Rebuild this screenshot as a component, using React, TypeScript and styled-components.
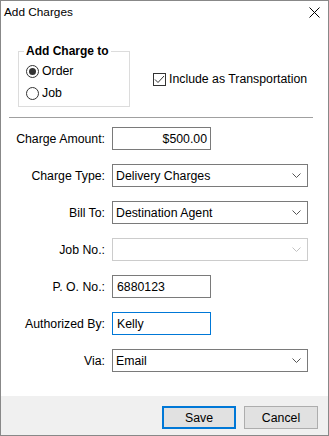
import styled, { createGlobalStyle } from 'styled-components';

const GlobalStyle = createGlobalStyle`
  html, body { margin: 0; padding: 0; background: #fff; }
  * { box-sizing: border-box; }
  body { font-family: "Liberation Sans", Arial, sans-serif; font-size: 12.3px; color: #000; }
`

const Window = styled.div`
  width: 329px;
  height: 436px;
  border: 1px solid #888;
  background: #fff;
  display: flex;
  flex-direction: column;
`

const TitleBar = styled.div`
  height: 22px;
  display: flex;
  align-items: center;
  justify-content: space-between;
  padding: 0 8px 0 3px;
  font-size: 11.8px;
`

const Close = styled.svg`
  width: 11px;
  height: 11px;
  margin-top: 1px;
`

const Body = styled.div`
  flex: 1;
  display: flex;
  flex-direction: column;
`

const TopRow = styled.div`
  display: flex;
  align-items: flex-start;
  padding: 21px 0 0 17px;
`

const GroupBox = styled.fieldset`
  margin: 0;
  width: 112px;
  padding: 2px 7px 2px 7px;
  border: 1px solid #dcdcdc;
`

const Legend = styled.legend`
  font-weight: bold;
  font-size: 12px;
  line-height: 14px;
  padding: 0 2px;
  margin-left: -2px;
`

const OptionRow = styled.label`
  height: 22px;
  display: flex;
  align-items: center;
  gap: 3px;
`

const RadioDot = styled.span<{ $checked?: boolean }>`
  width: 13px;
  height: 13px;
  border-radius: 50%;
  border: 1px solid #333;
  display: flex;
  align-items: center;
  justify-content: center;
  &::after {
    content: '';
    width: 7px;
    height: 7px;
    border-radius: 50%;
    background: ${p => (p.$checked ? '#333' : 'transparent')};
  }
`

const CheckRow = styled.label`
  display: flex;
  align-items: center;
  gap: 3px;
  margin: 28px 0 0 23px;
`

const CheckBox = styled.span`
  width: 13px;
  height: 13px;
  border: 1px solid #333;
  display: flex;
  align-items: center;
  justify-content: center;
`

const Separator = styled.div`
  height: 1px;
  background: #a0a0a0;
  margin: 10px 0 0 8px;
  width: 304px;
`

const Form = styled.div`
  display: grid;
  grid-template-columns: 104px auto;
  column-gap: 7px;
  row-gap: 14px;
  margin-top: 9px;
  align-items: center;
`

const Label = styled.div`
  text-align: right;
`

const TextBox = styled.div<{ $focus?: boolean; $right?: boolean }>`
  width: 99px;
  height: 23px;
  border: 1px solid ${p => (p.$focus ? '#0078d7' : '#7a7a7a')};
  display: flex;
  align-items: center;
  justify-content: ${p => (p.$right ? 'flex-end' : 'flex-start')};
  padding: 0 3px 0 4px;
`

const Select = styled.div<{ $disabled?: boolean }>`
  width: 196px;
  height: 23px;
  border: 1px solid ${p => (p.$disabled ? '#cccccc' : '#7a7a7a')};
  display: flex;
  align-items: center;
  justify-content: space-between;
  padding: 0 6px 0 3px;
  svg { stroke: ${p => (p.$disabled ? '#c2c2c2' : '#555')}; }
`

const Footer = styled.div`
  height: 39px;
  background: #f0f0f0;
  display: flex;
  justify-content: flex-end;
  align-items: flex-start;
  gap: 8px;
  padding: 10px 10px 0 0;
`

const Button = styled.button<{ $default?: boolean }>`
  width: 74px;
  height: 23px;
  font-family: inherit;
  font-size: 12.3px;
  color: #000;
  background: #e1e1e1;
  border: ${p => (p.$default ? '2px solid #0078d7' : '1px solid #adadad')};
  padding: 0;
`

function Chevron() {
  return (
    <svg width="9" height="5" viewBox="0 0 9 5" fill="none" strokeWidth="1">
      <path d="M0.5 0.5 L4.5 4.5 L8.5 0.5" />
    </svg>
  )
}

function App() {
  return (
    <Window>
      <GlobalStyle />
      <TitleBar>
        <span>Add Charges</span>
        <Close viewBox="0 0 11 11">
          <path d="M0.5 0.5 L10.5 10.5 M10.5 0.5 L0.5 10.5" stroke="#000" strokeWidth="1" />
        </Close>
      </TitleBar>
      <Body>
        <TopRow>
          <GroupBox>
            <Legend>Add Charge to</Legend>
            <OptionRow><RadioDot $checked />Order</OptionRow>
            <OptionRow><RadioDot />Job</OptionRow>
          </GroupBox>
          <CheckRow>
            <CheckBox>
              <svg width="11" height="9" viewBox="0 0 11 9" fill="none">
                <path d="M1 4.5 L4 7.5 L10 1" stroke="#333" strokeWidth="1" />
              </svg>
            </CheckBox>
            Include as Transportation
          </CheckRow>
        </TopRow>
        <Separator />
        <Form>
          <Label>Charge Amount:</Label>
          <TextBox $right>$500.00</TextBox>
          <Label>Charge Type:</Label>
          <Select><span>Delivery Charges</span><Chevron /></Select>
          <Label>Bill To:</Label>
          <Select><span>Destination Agent</span><Chevron /></Select>
          <Label>Job No.:</Label>
          <Select $disabled><span></span><Chevron /></Select>
          <Label>P. O. No.:</Label>
          <TextBox>6880123</TextBox>
          <Label>Authorized By:</Label>
          <TextBox $focus>Kelly</TextBox>
          <Label>Via:</Label>
          <Select><span>Email</span><Chevron /></Select>
        </Form>
      </Body>
      <Footer>
        <Button $default>Save</Button>
        <Button>Cancel</Button>
      </Footer>
    </Window>
  )
}

export default App
